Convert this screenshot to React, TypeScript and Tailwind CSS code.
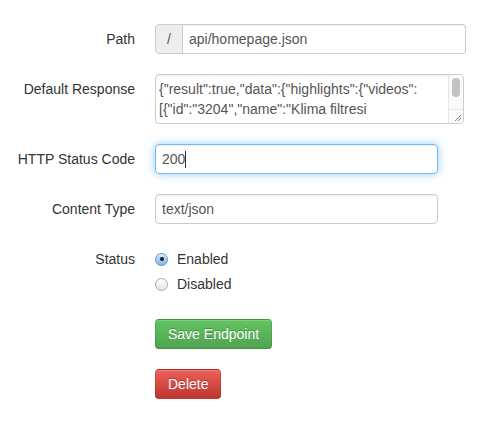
import React from 'react';

const font = { fontFamily: '"Liberation Sans", Arial, sans-serif' };

function Row({ label, children, className = '' }: { label: string; children: React.ReactNode; className?: string }) {
  return (
    <div className={`flex mb-5 ${className}`}>
      <label className="w-[135px] shrink-0 text-right pt-[5px] leading-5 text-[14px] text-[#333]">{label}</label>
      <div className="ml-5">{children}</div>
    </div>
  );
}

function Radio({ checked }: { checked?: boolean }) {
  return checked ? (
    <span className="w-[13px] h-[13px] rounded-full border border-[#5b8fc9] bg-gradient-to-b from-[#cfe4fb] to-[#7fb6ef] flex items-center justify-center shadow-[inset_0_1px_1px_rgba(255,255,255,0.6)]">
      <span className="w-[4px] h-[4px] rounded-full bg-[#1a1a1a]" />
    </span>
  ) : (
    <span className="w-[13px] h-[13px] rounded-full border border-[#a9a9a9] bg-gradient-to-b from-[#ffffff] to-[#e3e3e3]" />
  );
}

export default function App() {
  return (
    <div className="bg-white w-[495px] h-[442px] pt-6" style={font}>
      <Row label="Path">
        <div className="flex h-[30px] w-[311px]">
          <span className="w-[28px] shrink-0 bg-[#eeeeee] border border-[#cccccc] rounded-l-[4px] flex items-center justify-center text-[14px] text-[#555]">/</span>
          <div className="flex-1 border border-l-0 border-[#cccccc] rounded-r-[4px] px-[6px] leading-[28px] text-[14px] text-[#555] shadow-[inset_0_1px_1px_rgba(0,0,0,0.075)]">
            api/homepage.json
          </div>
        </div>
      </Row>

      <Row label="Default Response">
        <div className="relative w-[309px] h-[50px] border border-[#cccccc] rounded-[4px] shadow-[inset_0_1px_1px_rgba(0,0,0,0.075)] overflow-hidden">
          <div className="pl-[3px] pt-[4px] pr-[16px] leading-5 text-[14px] text-[#555] whitespace-nowrap">
            <div>{'{"result":true,"data":{"highlights":{"videos":'}</div>
            <div>{'[{"id":"3204","name":"Klima filtresi'}</div>
          </div>
          <div className="absolute right-0 top-0 bottom-0 w-[15px] border-l border-[#e6e6e6] bg-[#fafafa] flex flex-col">
            <div className="flex-1 flex justify-center pt-[3px]">
              <div className="w-[8px] h-[19px] rounded-full bg-[#c2c2c2]" />
            </div>
            <div className="h-[14px] border-t border-[#e6e6e6] relative">
              <svg className="absolute right-[1px] bottom-[1px]" width="9" height="9" viewBox="0 0 9 9">
                <path d="M8 2 L2 8 M8 5 L5 8" stroke="#888" strokeWidth="1" />
              </svg>
            </div>
          </div>
        </div>
      </Row>

      <Row label="HTTP Status Code">
        <div className="w-[283px] h-[30px] border border-[rgba(82,168,236,0.8)] rounded-[4px] px-[6px] leading-[28px] text-[14px] text-[#555] shadow-[inset_0_1px_1px_rgba(0,0,0,0.075),0_0_8px_rgba(82,168,236,0.6)] flex items-center">
          <span>200</span>
          <span className="w-px h-[17px] bg-[#333]" />
        </div>
      </Row>

      <Row label="Content Type">
        <div className="w-[283px] h-[30px] border border-[#cccccc] rounded-[4px] px-[6px] leading-[28px] text-[14px] text-[#555] shadow-[inset_0_1px_1px_rgba(0,0,0,0.075)]">
          text/json
        </div>
      </Row>

      <Row label="Status">
        <div className="text-[14px] text-[#333]">
          <div className="flex items-center gap-[9px] pt-[5px] h-[25px] mb-[5px]">
            <Radio checked />
            <span className="leading-5">Enabled</span>
          </div>
          <div className="flex items-center gap-[9px] h-[20px] mb-[5px]">
            <Radio />
            <span className="leading-5">Disabled</span>
          </div>
        </div>
      </Row>

      <div className="ml-[155px] flex flex-col items-start gap-5">
        <button className="h-[30px] px-3 rounded-[4px] text-[14px] text-white bg-gradient-to-b from-[#62c462] to-[#51a351] border border-[rgba(0,0,0,0.1)] border-b-[rgba(0,0,0,0.25)] shadow-[inset_0_1px_0_rgba(255,255,255,0.2),0_1px_2px_rgba(0,0,0,0.05)] [text-shadow:0_-1px_0_rgba(0,0,0,0.25)]">
          Save Endpoint
        </button>
        <button className="h-[30px] px-3 rounded-[4px] text-[14px] text-white bg-gradient-to-b from-[#ee5f5b] to-[#bd362f] border border-[rgba(0,0,0,0.1)] border-b-[rgba(0,0,0,0.25)] shadow-[inset_0_1px_0_rgba(255,255,255,0.2),0_1px_2px_rgba(0,0,0,0.05)] [text-shadow:0_-1px_0_rgba(0,0,0,0.25)]">
          Delete
        </button>
      </div>
    </div>
  );
}
